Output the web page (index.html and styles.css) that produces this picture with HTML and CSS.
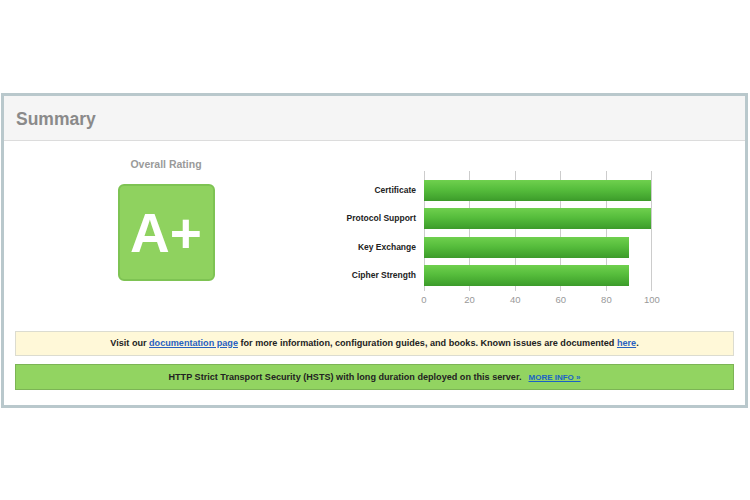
FILE: index.html
```html
<!DOCTYPE html>
<html>
<head>
<meta charset="utf-8">
<link rel="stylesheet" href="styles.css">
</head>
<body>
<div class="report">
  <div class="report-head">Summary</div>
  <div class="report-body">
    <div class="top-row">
      <div class="rating">
        <div class="rating-title">Overall Rating</div>
        <div class="grade">A+</div>
      </div>
      <div class="chart">
        <div class="chart-main">
          <div class="labels">
            <div class="label">Certificate</div>
            <div class="label">Protocol Support</div>
            <div class="label">Key Exchange</div>
            <div class="label">Cipher Strength</div>
          </div>
          <div class="plot">
            <div class="bar" style="width:100%"></div>
            <div class="bar" style="width:100%"></div>
            <div class="bar" style="width:90%"></div>
            <div class="bar" style="width:90%"></div>
          </div>
        </div>
        <div class="axis">
          <span class="tick">0</span>
          <span class="tick">20</span>
          <span class="tick">40</span>
          <span class="tick">60</span>
          <span class="tick">80</span>
          <span class="tick">100</span>
        </div>
      </div>
    </div>
    <div class="notice notice-info">Visit our <a href="#">documentation page</a> for more information, configuration guides, and books. Known issues are documented <a href="#">here</a>.</div>
    <div class="notice notice-good">HTTP Strict Transport Security (HSTS) with long duration deployed on this server.<a class="more" href="#">MORE INFO »</a></div>
  </div>
</div>
</body>
</html>
```
FILE: styles.css
```css
html, body {
  margin: 0;
  padding: 0;
  background: #fff;
}
body {
  font-family: "Liberation Sans", Arial, sans-serif;
  color: #222;
}
.report {
  margin: 93px 2px 0 1px;
  border: 3px solid #b9c8cc;
  background: #fff;
}
.report-head {
  height: 44px;
  background: #f5f5f5;
  border-bottom: 1px solid #dcdcdc;
  padding-left: 12px;
  font-size: 17.5px;
  font-weight: bold;
  color: #8a8a8a;
  line-height: 46px;
}
.report-body {
  padding: 0 11px 15px;
}
.top-row {
  display: flex;
  align-items: flex-start;
}
.rating {
  width: 302px;
  display: flex;
  flex-direction: column;
  align-items: center;
  padding-top: 17px;
}
.rating-title {
  font-size: 10.5px;
  line-height: 12px;
  font-weight: bold;
  color: #9a9a9a;
}
.grade {
  margin-top: 14px;
  width: 93px;
  border: 2px solid #7ec353;
  border-radius: 6px;
  background: #8fd25f;
  color: #fff;
  font-size: 55px;
  font-weight: bold;
  display: flex;
  align-items: center;
  justify-content: center;
  line-height: 1;
  padding-top: 2px;
  height: 91px;
}
.chart {
  padding-top: 30px;
}
.chart-main {
  display: flex;
  gap: 8px;
}
.labels {
  width: 99px;
  display: flex;
  flex-direction: column;
  gap: 7.33px;
  padding-top: 9px;
}
.label {
  height: 21px;
  line-height: 21px;
  text-align: right;
  font-size: 8.5px;
  font-weight: bold;
  color: #222;
  white-space: nowrap;
}
.plot {
  width: 228px;
  height: 120px;
  box-sizing: border-box;
  padding: 9px 0 5px;
  display: flex;
  flex-direction: column;
  gap: 7.33px;
  background-image: repeating-linear-gradient(90deg, #cccccc 0, #cccccc 1px, transparent 1px, transparent 45.4px);
}
.bar {
  height: 21px;
  background: linear-gradient(#6fd04e 0, #56bd3c 45%, #43a52f 85%, #3c9a2a 100%);
  max-width: 227px;
}
.axis {
  margin-left: 107px;
  width: 228px;
  margin-top: 3px;
  display: flex;
  justify-content: space-between;
}
.tick {
  width: 0;
  display: flex;
  justify-content: center;
  white-space: nowrap;
  font-size: 9.5px;
  line-height: 12px;
  color: #999;
}
.notice {
  height: 23px;
  line-height: 23px;
  text-align: center;
  font-size: 9.1px;
  font-weight: bold;
  color: #222;
  white-space: nowrap;
}
.notice a {
  color: #2860c0;
  text-decoration: underline;
}
.notice-info {
  margin-top: 25px;
  background: #fff8d8;
  border: 1px solid #dcdcd0;
}
.notice-good {
  margin-top: 8px;
  height: 24px;
  line-height: 24px;
  background: #92d461;
  border: 1px solid #7cb455;
}
.notice-good .more {
  margin-left: 7px;
  font-size: 8px;
  color: #1a62c6;
}
```
